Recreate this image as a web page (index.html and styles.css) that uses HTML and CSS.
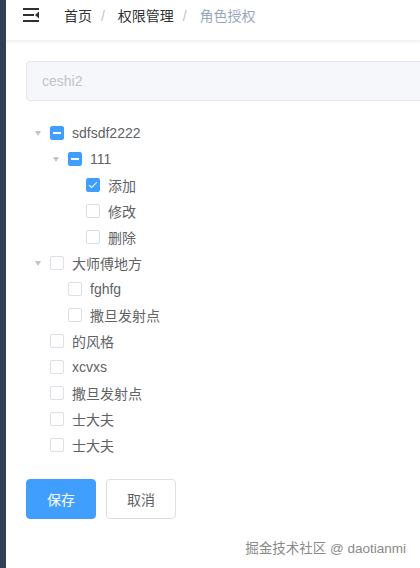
FILE: index.html
```html
<!DOCTYPE html>
<html lang="zh">
<head>
    <meta charset="utf-8">
    <title>角色授权</title>
    <link rel="stylesheet" href="styles.css">
</head>
<body>
<div class="app">
    <div class="sidebar"></div>
    <div class="main">
        <div class="navbar">
            <svg class="hamburger" width="16" height="14" viewBox="0 0 16 14">
                <rect x="0" y="0" width="16" height="2" fill="#303133"/>
                <rect x="0" y="6" width="11" height="2" fill="#303133"/>
                <polygon points="16,3.5 16,10.5 12,7" fill="#303133"/>
                <rect x="0" y="12" width="16" height="2" fill="#303133"/>
            </svg>
            <div class="breadcrumb">
                <span class="crumb">首页</span><span class="sep">/</span>
                <span class="crumb">权限管理</span><span class="sep">/</span>
                <span class="crumb last">角色授权</span>
            </div>
        </div>

        <div class="content">
            <div class="input">ceshi2</div>

            <div class="tree">
                <div class="node"><span class="arrow"></span><span class="box half"></span><span class="label">sdfsdf2222</span></div>
                <div class="node lv2"><span class="arrow"></span><span class="box half"></span><span class="label">111</span></div>
                <div class="node lv3"><span class="arrow leaf"></span><span class="box on"></span><span class="label">添加</span></div>
                <div class="node lv3"><span class="arrow leaf"></span><span class="box"></span><span class="label">修改</span></div>
                <div class="node lv3"><span class="arrow leaf"></span><span class="box"></span><span class="label">删除</span></div>
                <div class="node"><span class="arrow"></span><span class="box"></span><span class="label">大师傅地方</span></div>
                <div class="node lv2"><span class="arrow leaf"></span><span class="box"></span><span class="label">fghfg</span></div>
                <div class="node lv2"><span class="arrow leaf"></span><span class="box"></span><span class="label">撒旦发射点</span></div>
                <div class="node"><span class="arrow leaf"></span><span class="box"></span><span class="label">的风格</span></div>
                <div class="node"><span class="arrow leaf"></span><span class="box"></span><span class="label">xcvxs</span></div>
                <div class="node"><span class="arrow leaf"></span><span class="box"></span><span class="label">撒旦发射点</span></div>
                <div class="node"><span class="arrow leaf"></span><span class="box"></span><span class="label">士大夫</span></div>
                <div class="node"><span class="arrow leaf"></span><span class="box"></span><span class="label">士大夫</span></div>
            </div>

            <div class="buttons">
                <button class="btn primary">保存</button>
                <button class="btn">取消</button>
            </div>
        </div>

        <div class="watermark">掘金技术社区 @ daotianmi</div>
    </div>
</div>
</body>
</html>
```

FILE: styles.css
```css
html, body
{
    margin:0;
    height:100%;
    overflow:hidden;
    background:#fff;
}

body
{
    font-family:"Helvetica Neue", Helvetica, "Liberation Sans", "Noto Sans CJK SC", sans-serif;
    font-size:14px;
    color:#606266;
}

.app
{
    display:flex;
    height:568px;
}

.sidebar
{
    width:6px;
    flex:none;
    background:#304156;
}

.main
{
    flex:1;
    position:relative;
    min-width:0;
    overflow:hidden;
}

.navbar
{
    height:41px;
    display:flex;
    align-items:center;
    padding-left:17px;
    box-shadow:0 1px 3px rgba(0,21,41,.08);
    border-bottom:1px solid #f3f4f6;
    box-sizing:border-box;
}

.hamburger
{
    flex:none;
    margin-top:-11px;
}

.breadcrumb
{
    margin-left:25px;
    margin-top:-10px;
    color:#303133;
    white-space:nowrap;
}

.crumb.last
{
    color:#97a8be;
}

.sep
{
    color:#c0c4cc;
    margin:0 9px;
}

.content
{
    padding:20px 0 0 20px;
}

.input
{
    margin-right:-20px;
    height:40px;
    line-height:38px;
    box-sizing:border-box;
    padding:0 15px;
    border:1px solid #e4e7ed;
    border-right:0;
    border-radius:4px 0 0 4px;
    background:#f5f7fa;
    color:#c0c4cc;
}

.tree
{
    margin-top:19px;
}

.node
{
    height:26px;
    display:flex;
    align-items:center;
}

.node.lv2 { padding-left:18px; }
.node.lv3 { padding-left:36px; }

.arrow
{
    width:24px;
    height:26px;
    flex:none;
    position:relative;
}

.arrow::after
{
    content:"";
    position:absolute;
    left:9px;
    top:11px;
    border-left:3.5px solid transparent;
    border-right:3.5px solid transparent;
    border-top:5px solid #c0c4cc;
}

.arrow.leaf::after
{
    display:none;
}

.box
{
    width:14px;
    height:14px;
    box-sizing:border-box;
    border:1px solid #dcdfe6;
    border-radius:2px;
    background:#fff;
    flex:none;
    position:relative;
    margin-right:8px;
}

.box.on, .box.half
{
    background:#409eff;
    border-color:#409eff;
}

.box.half::after
{
    content:"";
    position:absolute;
    left:2px;
    right:2px;
    top:5px;
    height:2px;
    background:#fff;
}

.box.on::after
{
    content:"";
    position:absolute;
    left:4px;
    top:1px;
    width:3px;
    height:7px;
    border:1px solid #fff;
    border-left:0;
    border-top:0;
    transform:rotate(45deg);
}

.label
{
    white-space:nowrap;
}

.buttons
{
    margin-top:21px;
    display:flex;
    gap:10px;
}

.btn
{
    width:70px;
    height:40px;
    font:inherit;
    font-size:14px;
    color:#606266;
    background:#fff;
    border:1px solid #dcdfe6;
    border-radius:4px;
    padding:0;
}

.btn.primary
{
    color:#fff;
    background:#409eff;
    border-color:#409eff;
}

.watermark
{
    position:absolute;
    right:14px;
    bottom:11px;
    color:#8a8a8a;
    font-size:13.5px;
    white-space:nowrap;
}
```
